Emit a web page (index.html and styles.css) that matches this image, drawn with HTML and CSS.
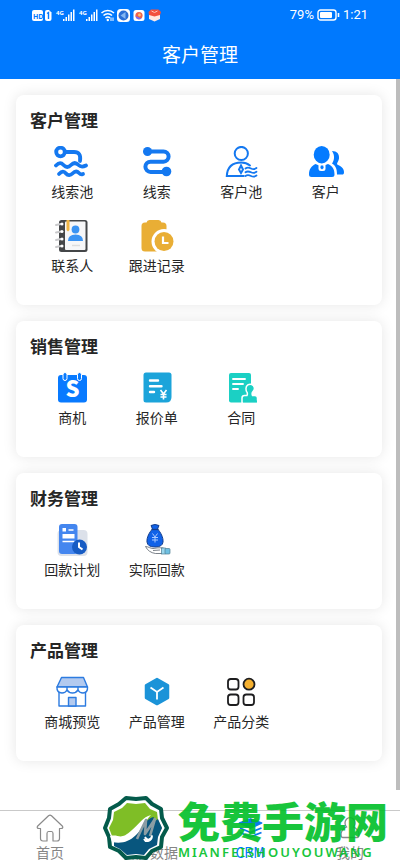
FILE: index.html
```html
<!DOCTYPE html>
<html lang="zh-CN">
<head>
    <meta charset="UTF-8">
    <meta name="viewport" content="width=device-width, initial-scale=1.0">
    <title>客户管理</title>
    <link rel="stylesheet" href="styles.css">
</head>
<body>
    <header class="top">
        <div class="status">
            <svg class="status-icons" viewBox="0 0 130 14" width="130" height="14" fill="#fff">
                <rect x="0" y="2" width="11" height="11" rx="2"/>
                <text x="1" y="10.5" font-size="7" font-weight="700" fill="#0079fe">HD</text>
                <path d="M13 4q0-2 2-2h2l2.500 2.500v6.500q0 2-2 2h-2.500q-2 0-2-2z"/>
                <path d="M15 5.500l1.500-1v6.500" fill="none" stroke="#0079fe" stroke-width="1.400"/>
                <text x="24" y="7" font-size="6" font-weight="700">4G</text>
                <path d="M31 11h1.500v2h-1.500zM33.500 9h1.500v4h-1.500zM36 6.500h1.500v6.500h-1.500zM38.500 4h1.500v9h-1.500zM41 1.500h1.500v11.500h-1.500z"/>
                <text x="47" y="7" font-size="6" font-weight="700">4G</text>
                <path d="M54 11h1.500v2h-1.500zM56.500 9h1.500v4h-1.500zM59 6.500h1.500v6.500h-1.500zM61.500 4h1.500v9h-1.500zM64 1.500h1.500v11.500h-1.500z"/>
                <g fill="none" stroke="#fff" stroke-width="1.500">
                    <path d="M69.500 5a9 9 0 0 1 12.500 0M71.500 7.500a6 6 0 0 1 8.500 0M73.500 10a3 3 0 0 1 4.500 0"/>
                </g>
                <circle cx="75.800" cy="12" r="1.200"/>
                <path d="M79 9.500v3.500M81 9.500v3.500" stroke="#fff"/>
                <rect x="85" y="1" width="13" height="13" rx="3.500"/>
                <circle cx="91.500" cy="7.500" r="5" fill="#2a6fd6"/>
                <path d="M93.500 4l-5 3.500 5 3.500z" fill="#82b6f3"/>
                <rect x="101.500" y="2" width="11" height="11" rx="2.500"/>
                <circle cx="107" cy="7.500" r="3.600" fill="#f0604c"/>
                <path d="M103.500 8a3.600 3.600 0 0 0 6 2.500z" fill="#7c6df2"/>
                <circle cx="107.500" cy="7" r="1.400" fill="#ffc06a"/>
                <path d="M117 5l5.500 2 5.500-2v6l-5.500 2.500-5.500-2.500z" fill="#ffe8e2"/>
                <path d="M116.500 4l2.500-2.500h7.500l2.500 2.500-1 3-5.500 1.500-5.500-1.500z" fill="#f2503f"/>
                <path d="M119.500 3l3 1.500 3-1.500" fill="none" stroke="#ffc2b5"/>
            </svg>
            <div class="status-right">
                <span>79%</span>
                <svg viewBox="0 0 23 12" width="23" height="12">
                    <rect x="1" y="1" width="18" height="10" rx="2.500" fill="none" stroke="#fff" stroke-width="1.400"/>
                    <rect x="3" y="3" width="12" height="6" rx="1" fill="#fff"/>
                    <path d="M21.500 4v4" stroke="#fff" stroke-width="1.600"/>
                </svg>
                <span>1:21</span>
            </div>
        </div>
        <h1>客户管理</h1>
    </header>

    <main>
        <div class="content">
            <section class="card">
                <h2>客户管理</h2>
                <div class="grid">
                    <a class="item" href="#">
                        <svg viewBox="0 0 36 32" fill="none" stroke="#1478f0" stroke-width="3.800" stroke-linecap="round">
                            <circle cx="6.500" cy="6" r="4.300"/>
                            <path d="M11 6h9c5 0 7 3 6 9"/>
                            <path d="M2 19.500c3-3 5-3 7.500-.5s5 2.500 7.500 0 5-2.500 7.500 0 4.500 2 7.500.5"/>
                            <path d="M5 28c3-3 5-3 7-.5s4.500 2 6.500 0 4.500-2.500 6.500-.5 2.500 1.500 4 1"/>
                        </svg>
                        <span>线索池</span>
                    </a>
                    <a class="item" href="#">
                        <svg viewBox="0 0 36 32" fill="none" stroke="#1478f0" stroke-width="4">
                            <path d="M8 5.500h16.500a5 5 0 0 1 0 10.200h-13a5 5 0 0 0 0 10.200h16"/>
                            <circle cx="8.500" cy="5.500" r="4.500" fill="#1478f0" stroke="none"/>
                            <circle cx="27.500" cy="25.500" r="4.800" fill="#1478f0" stroke="none"/>
                        </svg>
                        <span>线索</span>
                    </a>
                    <a class="item" href="#">
                        <svg viewBox="0 0 36 32" fill="none" stroke="#1478f0" stroke-width="2" stroke-linecap="round">
                            <circle cx="18.300" cy="7.500" r="6.600"/>
                            <path d="M27 19.500c-2.500-2-5-3-8.700-3-9 0-14 5-14.500 13.500h17"/>
                            <path d="M18 19.500l2 4-2 3.500-2-3.500z"/>
                            <path d="M22.500 22.500c2-1.500 3.500-1 5.500 0s3.500 1 5.500-.5M22.500 26.300c2-1.500 3.500-1 5.500 0s3.500 1 5.500-.5M22.500 30c2-1.500 3.500-1 5.500 0s3.500 1 5.500-.5" stroke-width="1.800"/>
                        </svg>
                        <span>客户池</span>
                    </a>
                    <a class="item" href="#">
                        <svg viewBox="0 0 36 32" fill="#057bff">
                            <path d="M24 5c5 0 7.500 3 7 7.500-.3 2.500-2 4.500-2 5.500 0 1.500 7 2 7 8 0 2-.5 2.500-2 2.500h-5c0-7-2-9-5-11 2.500-3.500 3-8 0-12.500z"/>
                            <ellipse cx="13.700" cy="8.700" rx="8" ry="8.700"/>
                            <path d="M1 28.500c0-5.500 2.500-8.500 6.500-10.500q6 3 12.500 0c4.500 2 6.500 5 6.500 10.500q0 2.500-2.500 2.500h-20.500q-2.500 0-2.500-2.500z"/>
                            <path d="M10.500 18.500h7v4q0 2.500-2.500 2.500h-2q-2.500 0-2.500-2.500z" fill="#fff"/>
                            <path d="M12.800 19.500h2.400l.5 2.500-1.700 1.500-1.700-1.500z"/>
                        </svg>
                        <span>客户</span>
                    </a>
                    <a class="item" href="#">
                        <svg viewBox="0 0 36 32">
                            <rect x="5" y="0" width="28.500" height="32" rx="2.500" fill="#444648"/>
                            <rect x="11" y="1.500" width="20.500" height="28.500" rx="1" fill="#f7f7f8"/>
                            <path d="M12.500 0h3v10l-1.500 1.500-1.500-1.500z" fill="#f0b545"/>
                            <circle cx="21.500" cy="9.500" r="3.900" fill="#3b94f3"/>
                            <path d="M14 21q0-6.500 7.500-6.500t7.500 6.500z" fill="#3b94f3"/>
                            <path d="M18 25.500h8" stroke="#ddd" stroke-width="1.500"/>
                            <g stroke="#c9c9cb" stroke-width="2" stroke-linecap="round">
                                <path d="M2 5l5-1M2 12.500l5-1M2 20l5-1M2 27l5-1"/>
                            </g>
                            <g fill="#fff">
                                <circle cx="8" cy="4" r="1.500"/><circle cx="8" cy="11.500" r="1.500"/>
                                <circle cx="8" cy="19" r="1.500"/><circle cx="8" cy="26" r="1.500"/>
                            </g>
                        </svg>
                        <span>联系人</span>
                    </a>
                    <a class="item" href="#">
                        <svg viewBox="0 0 36 32" fill="#e9ae35">
                            <path d="M2.500 6q0-3.500 3.500-3.500h1.500q.5-2.500 3-2.500h9q2.500 0 3 2.500h1.500q3.500 0 3.500 3.500v22q0 3.500-3.500 3.500h-18q-3.500 0-3.500-3.500z"/>
                            <circle cx="25" cy="21.500" r="12.500" fill="#fff"/>
                            <circle cx="25" cy="21.500" r="9.500"/>
                            <path d="M24 16.500v6.500h5.500" fill="none" stroke="#fff" stroke-width="2.200"/>
                        </svg>
                        <span>跟进记录</span>
                    </a>
                </div>
            </section>

            <section class="card">
                <h2>销售管理</h2>
                <div class="grid">
                    <a class="item" href="#">
                        <svg viewBox="0 0 36 32">
                            <rect x="4" y="3" width="29" height="27.500" rx="3" fill="#087aff"/>
                            <g fill="#087aff" stroke="#fff" stroke-width="1">
                                <rect x="9" y=".5" width="4" height="8" rx="2"/>
                                <rect x="23.500" y=".5" width="4" height="8" rx="2"/>
                            </g>
                            <text x="18.500" y="24.500" text-anchor="middle" font-size="22" font-weight="900" fill="#fff">S</text>
                        </svg>
                        <span>商机</span>
                    </a>
                    <a class="item" href="#">
                        <svg viewBox="0 0 36 32">
                            <path d="M4.500 3q0-2.500 2.500-2.500h23q2.500 0 2.500 2.500v22q0 5.500-5.500 5.500h-20q-2.500 0-2.500-2.500z" fill="#1ca4da"/>
                            <path d="M11 8.500h8M11 14.200h11.500M11 20h4" stroke="#fff" stroke-width="2.400" stroke-linecap="round"/>
                            <path d="M21.500 18l3 4 3-4M24.500 22v5.500M21.500 22.500h6M21.500 25h6" fill="none" stroke="#fff" stroke-width="1.600"/>
                        </svg>
                        <span>报价单</span>
                    </a>
                    <a class="item" href="#">
                        <svg viewBox="0 0 36 32" fill="#1bd0c4">
                            <rect x="6" y="1" width="22" height="29.500" rx="2"/>
                            <path d="M10 7h12M10 12h10M10 17h5" stroke="#fff" stroke-width="1.900" stroke-linecap="round"/>
                            <path d="M23 16.500a4.200 4.200 0 1 1 7 3q-1.500 1.500-.5 4h2.500q2.500 0 2.500 2.500v5h-15.500v-5q0-2.500 2.500-2.500h2.500q1-2.500-.5-4-.5-1-.5-3z" stroke="#fff" stroke-width="1.500"/>
                            <path d="M20 29.500h14" stroke="#1bd0c4" stroke-width="2"/>
                        </svg>
                        <span>合同</span>
                    </a>
                </div>
            </section>

            <section class="card">
                <h2>财务管理</h2>
                <div class="grid">
                    <a class="item" href="#">
                        <svg viewBox="0 0 36 32">
                            <rect x="3.500" y="6" width="30" height="26" rx="4" fill="#dce1ea"/>
                            <rect x="5" y="0" width="18.500" height="30" rx="3" fill="#4486ef"/>
                            <path d="M8.500 4h3.500v3.500h-3.500zM8.500 10h12v4.500h-12z" fill="#fff"/>
                            <path d="M14.500 6h5M8.500 17.500h12" stroke="#fff" stroke-width="1.300"/>
                            <circle cx="25.500" cy="23" r="7.500" fill="#175cc4"/>
                            <path d="M25 18.500v4.500l3.500 2.500" fill="none" stroke="#fff" stroke-width="2"/>
                        </svg>
                        <span>回款计划</span>
                    </a>
                    <a class="item" href="#">
                        <svg viewBox="0 0 36 32">
                            <path d="M12 1.500q4-2 8 0l-1.500 3.500c3 3 6 8.500 5.500 13q-.5 5-8 5t-8-5c-.5-4.500 2.500-10 5.500-13z" fill="#1162e8" stroke="#163f8c" stroke-width="1"/>
                            <path d="M12.500 5.500h7" stroke="#163f8c" stroke-width="1.300"/>
                            <path d="M13.500 9.500l2.500 3.500 2.500-3.500M16 13v5.500M13 13.500h6M13 16h6" fill="none" stroke="#a9c8ff" stroke-width="1"/>
                            <path d="M6.500 22.500c3 0 5 2.500 9 2 2-.5 4-1 9-.5v5.500h-8q-7-1-10-7z" fill="#fff" stroke="#59616b" stroke-width=".8"/>
                            <path d="M14 26.500l7-.5" stroke="#59616b" stroke-width=".8"/>
                            <rect x="22.500" y="24" width="4" height="6" fill="#9cd8ee" stroke="#4d7e94" stroke-width=".7"/>
                            <rect x="26" y="24.500" width="5" height="5.500" rx="1" fill="#6fc0e2" stroke="#4d7e94" stroke-width=".7"/>
                        </svg>
                        <span>实际回款</span>
                    </a>
                </div>
            </section>

            <section class="card">
                <h2>产品管理</h2>
                <div class="grid">
                    <a class="item" href="#">
                        <svg viewBox="0 0 36 32" stroke="#2c7be0" stroke-width="1.400" stroke-linejoin="round">
                            <path d="M5 14v16h26.500v-16" fill="#fff"/>
                            <rect x="14.500" y="21.500" width="7.500" height="8.500" fill="#b3caef"/>
                            <path d="M7.500 1.500h22l4 9.500h-30.500z" fill="#b3caef"/>
                            <path d="M3 11h30.500q.5 5.500-4.500 6-3.500 0-5-3-2 3-5.500 3t-5.500-3q-1.500 3-5 3-5.500-.5-5-6z" fill="#fff"/>
                            <path d="M13 11v3M24 11v3" fill="none"/>
                        </svg>
                        <span>商城预览</span>
                    </a>
                    <a class="item" href="#">
                        <svg viewBox="0 0 36 32">
                            <path d="M18 3l11 6.300v12.500l-11 6.300-11-6.300v-12.500z" fill="#1b93d8" stroke="#1b93d8" stroke-width="2.500" stroke-linejoin="round"/>
                            <path d="M11.500 11.500l6.500 4.500 6.500-4.500M18 16v7.500" fill="none" stroke="#fff" stroke-width="1.800"/>
                        </svg>
                        <span>产品管理</span>
                    </a>
                    <a class="item" href="#">
                        <svg viewBox="0 0 36 32" fill="none" stroke="#1d1d1f" stroke-width="1.800">
                            <rect x="5" y="3" width="10.500" height="10.500" rx="2.800"/>
                            <circle cx="26" cy="8.200" r="5.500" fill="#f5b02f"/>
                            <rect x="5" y="18.500" width="10.500" height="10.500" rx="2.800"/>
                            <rect x="20.500" y="18.500" width="10.500" height="10.500" rx="2.800"/>
                        </svg>
                        <span>产品分类</span>
                    </a>
                </div>
            </section>
        </div>
        <div class="scrollbar"></div>
    </main>

    <nav class="tabs">
        <a class="tab" href="#">
            <svg viewBox="0 0 28 28" fill="none" stroke="#8a8a8a" stroke-width="1.200" stroke-linejoin="round">
                <path d="M12.500 1.700q1.500-1.200 3 0l11 10.500q1 2.300-1.500 2.300h-1.500v10q0 2.500-2.500 2.500h-4v-7.500q0-2-1.500-2h-3q-1.500 0-1.500 2v7.500h-4q-2.500 0-2.500-2.500v-10h-1.500q-2.500 0-1.500-2.300z"/>
            </svg>
            <span>首页</span>
        </a>
        <a class="tab" href="#">
            <svg viewBox="0 0 28 28" fill="none" stroke="#8a8a8a" stroke-width="1.200">
                <rect x="5" y="5" width="18" height="18" rx="2"/>
                <path d="M5 10h18M10 3v4M18 3v4"/>
            </svg>
            <span>日历数据</span>
        </a>
        <a class="tab active" href="#">
            <svg viewBox="0 0 28 28" fill="none" stroke="#0b78f0" stroke-width="1.800" stroke-linejoin="round">
                <path d="M14.500 5l11 4-11 5-11-5z" fill="#0b78f0"/>
                <path d="M4 14l10.500 4.500 11-4.500M4 18.500l10.500 4.500 11-4.500"/>
            </svg>
            <span>CRM</span>
        </a>
        <a class="tab" href="#">
            <svg viewBox="0 0 28 28" fill="none" stroke="#8a8a8a" stroke-width="1.300">
                <path d="M10.500 13a5 5.500 0 1 1 7 0q5.500 2.500 5.500 8 0 2.500-2 2.500h-14q-2 0-2-2.500 0-5.500 5.500-8z"/>
            </svg>
            <span>我的</span>
        </a>
    </nav>

    <div class="watermark">
        <svg viewBox="0 0 68 66" width="68" height="66" stroke-linejoin="round">
            <path d="M24 3l10 1 10-1 6 6 9 5 1 9 5 10-5 9-1 10-9 4-6 7-10-1-10 1-7-7-9-4-1-10-4-9 4-10 1-9 9-5z" fill="#fff" stroke="#045b4b" stroke-width="4"/>
            <path d="M25 8l9 1 9-1 5 6 7 3 1 8 4 8-8 14h-40l-2-6-3-8 4-8 1-8 8-4z" fill="#7fbe26"/>
            <path d="M12 47c11-1 20-5 26-13 4-5 8-11 14-12l-2 6 6-4 4 9-4 9-1 8-8 4-5 6-8-1-9 1-7-6-6-3z" fill="#08567e"/>
            <path d="M8 41c10-2 10 5 22-6 7-6 11-13 19-15-6 6-8 13-15 20-7 7-15 9-24 7z" fill="#fff"/>
            <path d="M35 44c3-7 6-13 9-19l-1 14 10-15-5 17" fill="none" stroke="#8b9da4" stroke-width="2.600"/>
            <path d="M43 42c2 4 6 3 7-1 0 5-6 7-8 3" fill="none" stroke="#fff" stroke-width="1.800"/>
        </svg>
        <div class="watermark-text">
            <strong>免费手游网</strong>
            <span>MIANFEISHOUYOUWANG</span>
        </div>
    </div>
</body>
</html>
```
FILE: styles.css
```css
:root {
    --primary: #0079fe;
    --text: #262626;
    --muted: #858585;
    --mark: #00bf28;
}

* {
    box-sizing: border-box;
}

body {
    margin: 0;
    min-height: 100vh;
    display: flex;
    flex-direction: column;
    position: relative;
    background: #fff;
    color: var(--text);
    font-family: "Noto Sans", "Noto Sans CJK SC", sans-serif;
}

a {
    color: inherit;
    text-decoration: none;
}

/* Header */
.top {
    background: var(--primary);
    color: #fff;
}

.status {
    display: flex;
    justify-content: space-between;
    align-items: center;
    height: 30px;
    padding: 0 32px;
}

.status-right {
    display: flex;
    align-items: center;
    gap: 3px;
    font-family: Roboto, sans-serif;
    font-size: 13px;
    line-height: 20px;
}

.top h1 {
    margin: 0;
    padding: 10px 0 11px;
    font-family: "Noto Sans CJK SC", sans-serif;
    font-size: 19px;
    font-weight: 400;
    line-height: 28px;
    text-align: center;
}

/* Cards */
main {
    flex: 1;
    display: flex;
}

.content {
    flex: 1;
    display: flex;
    flex-direction: column;
    gap: 16px;
    padding: 16px 14px 16px 16px;
}

.scrollbar {
    width: 4px;
    margin-bottom: 20px;
    background: #bdbdbd;
}

.card {
    padding: 14px 14px 30px;
    background: #fff;
    border-radius: 8px;
    box-shadow: 0 0 14px rgba(0, 0, 0, 0.1);
    font-family: "Noto Sans CJK SC", sans-serif;
}

.card h2 {
    margin: 0 0 15px;
    font-size: 17px;
    font-weight: 700;
    line-height: 22px;
}

.grid {
    display: grid;
    grid-template-columns: repeat(4, 1fr);
    row-gap: 19px;
}

.item {
    display: flex;
    flex-direction: column;
    align-items: center;
    gap: 3px;
    font-size: 14px;
    line-height: 20px;
}

.item svg {
    width: 36px;
    height: 32px;
}

/* Bottom tabs */
.tabs {
    display: flex;
    padding: 3px 0 4px;
    border-top: 1px solid #c9c9c9;
    background: #fff;
}

.tab {
    flex: 1;
    display: flex;
    flex-direction: column;
    align-items: center;
    color: var(--muted);
    font-family: "Noto Sans CJK SC", sans-serif;
    font-size: 14px;
    line-height: 20px;
}

.tab svg {
    width: 28px;
    height: 28px;
}

.tab.active {
    color: var(--primary);
}

/* Watermark over the tabs */
.watermark {
    position: absolute;
    right: 12px;
    bottom: 5px;
    display: flex;
    align-items: center;
    gap: 8px;
    pointer-events: none;
}

.watermark-text {
    display: flex;
    flex-direction: column;
    color: var(--mark);
    opacity: 0.9;
}

.watermark strong {
    font-family: "Noto Sans CJK SC", sans-serif;
    font-size: 42px;
    font-weight: 900;
    line-height: 48px;
}

.watermark span {
    font-size: 13px;
    font-weight: 600;
    line-height: 16px;
    letter-spacing: 2px;
}
```
